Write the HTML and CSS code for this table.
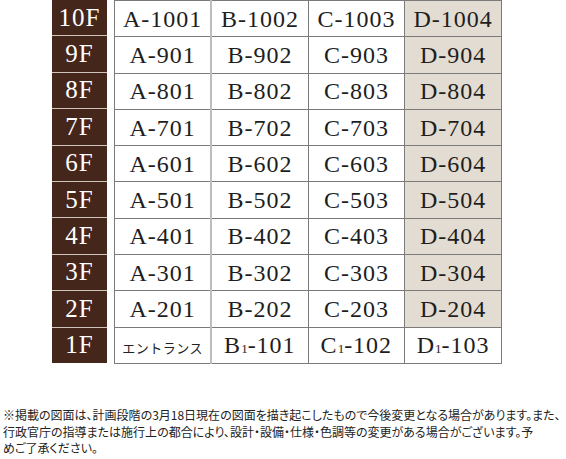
FILE: index.html
```html
<!DOCTYPE html>
<html lang="ja">
<head>
<meta charset="utf-8">
<link rel="stylesheet" href="styles.css">
</head>
<body>
<div class="plan">
  <div class="floors">
    <div class="floor">10F</div>
    <div class="floor">9F</div>
    <div class="floor">8F</div>
    <div class="floor">7F</div>
    <div class="floor">6F</div>
    <div class="floor">5F</div>
    <div class="floor">4F</div>
    <div class="floor">3F</div>
    <div class="floor">2F</div>
    <div class="floor">1F</div>
  </div>
  <table class="units">
    <tr><td class="a">A-1001</td><td>B-1002</td><td>C-1003</td><td class="d">D-1004</td></tr>
    <tr><td class="a">A-901</td><td>B-902</td><td>C-903</td><td class="d">D-904</td></tr>
    <tr><td class="a">A-801</td><td>B-802</td><td>C-803</td><td class="d">D-804</td></tr>
    <tr><td class="a">A-701</td><td>B-702</td><td>C-703</td><td class="d">D-704</td></tr>
    <tr><td class="a">A-601</td><td>B-602</td><td>C-603</td><td class="d">D-604</td></tr>
    <tr><td class="a">A-501</td><td>B-502</td><td>C-503</td><td class="d">D-504</td></tr>
    <tr><td class="a">A-401</td><td>B-402</td><td>C-403</td><td class="d">D-404</td></tr>
    <tr><td class="a">A-301</td><td>B-302</td><td>C-303</td><td class="d">D-304</td></tr>
    <tr><td class="a">A-201</td><td>B-202</td><td>C-203</td><td class="d">D-204</td></tr>
    <tr><td class="a"><span class="entrance">エントランス</span></td><td>B<span class="sub">1</span>-101</td><td>C<span class="sub">1</span>-102</td><td>D<span class="sub">1</span>-103</td></tr>
  </table>
</div>
<p class="note">※掲載の図面は、計画段階の3月18日現在の図面を描き起こしたもので今後変更となる場合があります。また、<br>行政官庁の指導または施行上の都合により、設計・設備・仕様・色調等の変更がある場合がございます。予<br>めご了承ください。</p>
</body>
</html>
```

FILE: styles.css
```css
html, body {
  margin: 0;
  padding: 0;
  background: #fff;
}

.plan {
  display: flex;
  align-items: flex-start;
  gap: 7px;
  padding-left: 52px;
}

.floors {
  display: grid;
  grid-template-rows: repeat(10, 1fr);
  row-gap: 1px;
  width: 55px;
  height: 363px;
  background: #cdc4bc;
}

.floor {
  background: #45261a;
  color: #fff;
  font-family: "Liberation Serif", serif;
  font-size: 25px;
  letter-spacing: 1px;
  display: flex;
  align-items: center;
  justify-content: center;
}

.units {
  border-collapse: collapse;
  width: 388px;
  height: 364px;
  table-layout: fixed;
  border: 1px solid #7a7a7a;
}

.units td {
  border: 1px solid #7a7a7a;
  text-align: center;
  vertical-align: middle;
  padding: 0;
  font-family: "Liberation Serif", serif;
  font-size: 24px;
  letter-spacing: 1px;
  color: #1e1e1e;
  line-height: 1;
}

.units td.a {
  border-right: 2px solid #bdbdbd;
}

.units td.d {
  background: #e3dcd2;
}

.sub {
  font-size: 13px;
  letter-spacing: 0;
}

.entrance {
  font-family: "Noto Sans CJK JP", sans-serif;
  font-size: 13px;
  letter-spacing: 0.5px;
  color: #222;
}

.note {
  margin: 43px 0 0;
  padding-left: 3px;
  font-family: "Noto Sans CJK JP", sans-serif;
  font-size: 12px;
  line-height: 16.5px;
  color: #222;
  font-feature-settings: "palt";
  white-space: nowrap;
}
```
